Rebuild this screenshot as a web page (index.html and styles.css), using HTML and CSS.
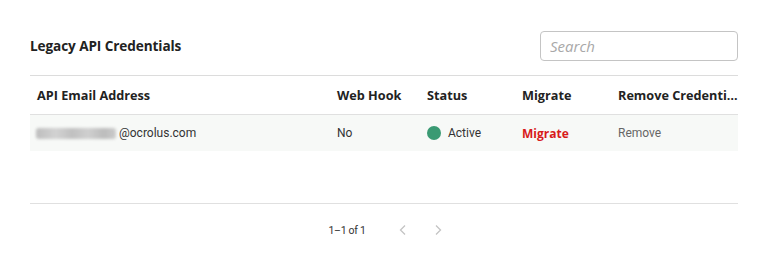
FILE: index.html
```html
<!DOCTYPE html>
<html lang="en">
<head>
    <meta charset="UTF-8">
    <title>Legacy API Credentials</title>
    <link rel="stylesheet" href="styles.css">
</head>
<body>
    <div class="panel">
        <div class="panel-head">
            <h2>Legacy API Credentials</h2>
            <input type="text" class="search" placeholder="Search">
        </div>
        <table class="creds">
            <thead>
                <tr>
                    <th class="c-email">API Email Address</th>
                    <th class="c-hook">Web Hook</th>
                    <th class="c-status">Status</th>
                    <th class="c-migrate">Migrate</th>
                    <th class="c-remove"><span class="trunc">Remove Credentials</span></th>
                </tr>
            </thead>
            <tbody>
                <tr>
                    <td><span class="blurred"></span>@ocrolus.com</td>
                    <td>No</td>
                    <td><span class="dot"></span>Active</td>
                    <td><a class="migrate">Migrate</a></td>
                    <td><a class="remove">Remove</a></td>
                </tr>
            </tbody>
        </table>
        <div class="pager">
            <span class="count">1–1 of 1</span>
            <button class="nav" disabled>
                <svg width="10" height="12" viewBox="0 0 10 12"><path d="M7 1.5 L2.5 6 L7 10.5" fill="none" stroke="#c4c4c4" stroke-width="1.3"/></svg>
            </button>
            <button class="nav" disabled>
                <svg width="10" height="12" viewBox="0 0 10 12"><path d="M3 1.5 L7.5 6 L3 10.5" fill="none" stroke="#c4c4c4" stroke-width="1.3"/></svg>
            </button>
        </div>
    </div>
</body>
</html>
```
FILE: styles.css
```css
body {
    margin: 0;
    background: #fff;
    font-family: "Open Sans", Arial, sans-serif;
    color: #222;
}
.panel {
    padding: 30px 30px 0 30px;
}
.panel-head {
    display: flex;
    justify-content: space-between;
    align-items: center;
    height: 31px;
    padding-bottom: 14px;
    border-bottom: 1px solid #dcdcdc;
}
.panel-head h2 {
    margin: 0;
    font-size: 13.6px;
    font-weight: 700;
    letter-spacing: -0.1px;
    color: #222;
}
.search {
    width: 198px;
    height: 30px;
    box-sizing: border-box;
    border: 1px solid #c4c4c4;
    border-radius: 4px;
    padding: 0 9px;
    font-family: "Open Sans", Arial, sans-serif;
    font-size: 15px;
    font-style: italic;
    margin-top: 1px;
}
.search::placeholder {
    color: #a8a8a8;
}
.creds {
    width: 100%;
    border-collapse: collapse;
    table-layout: fixed;
    font-size: 12px;
}
.creds th {
    text-align: left;
    font-weight: 700;
    font-size: 12.7px;
    height: 38px;
    padding: 0 0 0 7px;
    border-bottom: 1px solid #e0e0e0;
    color: #222;
}
.creds td {
    height: 36px;
    padding: 0 0 0 7px;
    background: #f7f9f7;
    font-family: Roboto, Arial, sans-serif;
    font-size: 12px;
    color: #333;
}
.c-email { width: 293px; }
.c-hook { width: 83px; }
.c-status { width: 88px; }
.c-migrate { width: 89px; }
.trunc {
    display: block;
    overflow: hidden;
    white-space: nowrap;
    text-overflow: ellipsis;
}
.blurred {
    display: inline-block;
    width: 80px;
    height: 11px;
    border-radius: 3px;
    background: linear-gradient(90deg, #bdbdbd, #d2d2d2 25%, #c0c0c0 45%, #cfcfcf 65%, #bcbcbc 85%, #cbcbcb);
    filter: blur(1.5px);
    vertical-align: middle;
    margin: 0 3px 0 -1px;
}
.dot {
    display: inline-block;
    width: 14px;
    height: 14px;
    border-radius: 50%;
    background: #3a9a73;
    vertical-align: -3px;
    margin-right: 7px;
}
.migrate {
    color: #d81b1b;
    font-weight: 700;
    font-family: "Open Sans", Arial, sans-serif;
}
.remove {
    color: #666;
}
.pager {
    border-top: 1px solid #e0e0e0;
    margin-top: 52px;
    display: flex;
    justify-content: center;
    align-items: center;
    height: 52px;
    padding-left: 16px;
    font-family: Roboto, Arial, sans-serif;
    font-size: 10.5px;
    letter-spacing: -0.3px;
    color: #333;
}
.count {
    margin-right: 20px;
}
.nav {
    border: none;
    background: none;
    padding: 0;
    width: 35px;
    display: flex;
    justify-content: center;
}
```
